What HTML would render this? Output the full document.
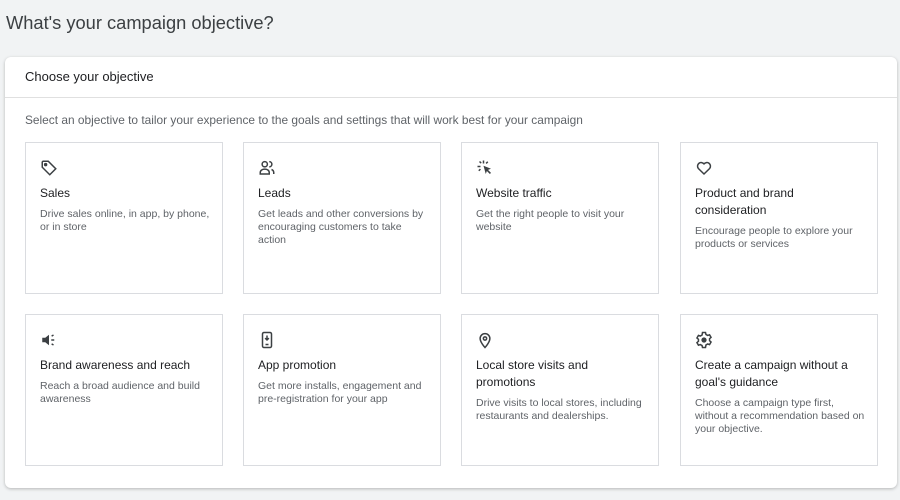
<!DOCTYPE html>
<html><head><meta charset="utf-8"><style>
*{box-sizing:border-box;margin:0;padding:0}
body{width:900px;height:500px;background:#f1f3f4;font-family:"Liberation Sans",Arial,sans-serif;position:relative;overflow:hidden;color:#202124}
h1{position:absolute;left:6px;top:12px;font-size:18.3px;font-weight:400;color:#3c4043}
.panel{position:absolute;left:5px;top:57px;width:892px;height:431px;background:#fff;border-radius:6px;box-shadow:0 1px 3px rgba(0,0,0,.25)}
.hd{position:absolute;left:20px;top:12px;font-size:13px;color:#202124}
.div{position:absolute;left:0;right:0;top:40px;border-top:1px solid #e0e0e0}
.sub{position:absolute;left:20px;top:56px;font-size:11.9px;color:#5f6368}
.c{position:absolute;width:198px;height:152px;border:1px solid #dadce0;background:#fff}
.ic{position:absolute;left:14px;top:16px;width:18px;height:18px}
.t{position:absolute;left:14px;top:42px;right:10px;font-size:12px;line-height:17px;color:#202124;font-weight:500}
.d{position:absolute;left:14px;right:8px;font-size:10.5px;line-height:13px;color:#5f6368}
</style></head><body>
<h1>What's your campaign objective?</h1>
<div class="panel">
<div class="hd">Choose your objective</div>
<div class="div"></div>
<div class="sub">Select an objective to tailor your experience to the goals and settings that will work best for your campaign</div>

<div class="c" style="left:20px;top:85px">
<svg class="ic" viewBox="0 0 24 24" fill="none" stroke="#3c4043" stroke-width="2"><path d="M3 4v7l10 10 8-8L11 3H4z"/><circle cx="7.5" cy="7.5" r="1.3" fill="#3c4043"/></svg>
<div class="t">Sales</div><div class="d" style="top:65px">Drive sales online, in app, by phone, or in store</div></div>

<div class="c" style="left:238px;top:85px">
<svg class="ic" viewBox="0 0 24 24" fill="none" stroke="#3c4043" stroke-width="2"><circle cx="9" cy="7" r="3.5"/><path d="M3 20v-2c0-3 3-4.5 6-4.5s6 1.5 6 4.5v2z"/><path d="M15 3.5a3.5 3.5 0 0 1 0 7"/><path d="M18 14c2 .8 3 2 3 4v2"/></svg>
<div class="t">Leads</div><div class="d" style="top:65px">Get leads and other conversions by encouraging customers to take action</div></div>

<div class="c" style="left:456px;top:85px">
<svg class="ic" viewBox="0 0 24 24" fill="#3c4043"><path d="M10 9l10 4-4 1.5 4 4-1.5 1.5-4-4L13 20z"/><rect x="9" y="2" width="2" height="4"/><rect x="2" y="9" width="4" height="2"/><path d="M4 4l1.4-1.4 2.2 2.2-1.4 1.4zM3 15l2.2-2.2 1.4 1.4-2.2 2.2zM15 3l1.4 1.4-2.2 2.2-1.4-1.4z"/></svg>
<div class="t">Website traffic</div><div class="d" style="top:65px">Get the right people to visit your website</div></div>

<div class="c" style="left:675px;top:85px">
<svg class="ic" viewBox="0 0 24 24" fill="none" stroke="#3c4043" stroke-width="2"><path d="M12 20l-7.5-7.3A4.8 4.8 0 0 1 12 6.5a4.8 4.8 0 0 1 7.5 6.2z"/></svg>
<div class="t">Product and brand consideration</div><div class="d" style="top:82px">Encourage people to explore your products or services</div></div>

<div class="c" style="left:20px;top:257px">
<svg class="ic" viewBox="0 0 24 24" fill="#3c4043"><path d="M3 9h4l5-4v14l-5-4H3z"/><rect x="15" y="11" width="4" height="2"/><path d="M15 6l2.5-1.5 1 1.7L16 7.7zM15 18l2.5 1.5 1-1.7L16 16.3z"/></svg>
<div class="t">Brand awareness and reach</div><div class="d" style="top:65px">Reach a broad audience and build awareness</div></div>

<div class="c" style="left:238px;top:257px">
<svg class="ic" viewBox="0 0 24 24" fill="none" stroke="#3c4043" stroke-width="2"><rect x="6" y="2" width="12" height="20" rx="2"/><path d="M12 6v6M9.5 9.5 12 12l2.5-2.5M10 18h4"/></svg>
<div class="t">App promotion</div><div class="d" style="top:65px">Get more installs, engagement and pre-registration for your app</div></div>

<div class="c" style="left:456px;top:257px">
<svg class="ic" viewBox="0 0 24 24" fill="none" stroke="#3c4043" stroke-width="2"><path d="M12 22s-6.5-7-6.5-12a6.5 6.5 0 0 1 13 0c0 5-6.5 12-6.5 12z"/><circle cx="12" cy="10" r="2.2"/></svg>
<div class="t">Local store visits and promotions</div><div class="d" style="top:82px">Drive visits to local stores, including restaurants and dealerships.</div></div>

<div class="c" style="left:675px;top:257px">
<svg class="ic" viewBox="0 0 24 24" fill="none" stroke="#3c4043" stroke-width="2"><path d="M10 2h4l.6 2.6 2.3 1.3 2.5-.8 2 3.4-2 1.8v2.6l2 1.8-2 3.4-2.5-.8-2.3 1.3L14 22h-4l-.6-2.6-2.3-1.3-2.5.8-2-3.4 2-1.8v-2.6l-2-1.8 2-3.4 2.5.8 2.3-1.3z"/><circle cx="12" cy="12" r="2.5" fill="#3c4043"/></svg>
<div class="t">Create a campaign without a goal's guidance</div><div class="d" style="top:82px">Choose a campaign type first, without a recommendation based on your objective.</div></div>
</div>
</body></html>
